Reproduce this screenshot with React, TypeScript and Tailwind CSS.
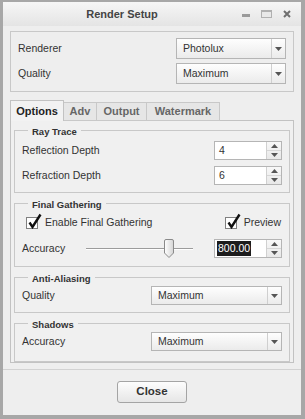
import React from "react";

function DropDown({ value, className = "" }: { value: string; className?: string }) {
  return (
    <div className={`flex border border-[#b5b5b5] bg-linear-to-b from-[#fefefe] to-[#ebebeb] ${className}`}>
      <div className="flex flex-1 items-center pl-[6px] text-[10.5px] text-[#333]">{value}</div>
      <div className="flex w-[14px] items-center justify-center border-l border-[#cfcfcf]">
        <svg width="7" height="4" viewBox="0 0 7 4">
          <path d="M0 0h7L3.5 4z" fill="#555" />
        </svg>
      </div>
    </div>
  );
}

function SpinBox({ value, selected = false }: { value: string; selected?: boolean }) {
  return (
    <div className="flex h-[19px] w-[68px] border border-[#b5b5b5] bg-white">
      <div className="flex flex-1 items-center pl-[2px] text-[10.5px] text-[#333]">
        {selected ? <span className="bg-[#1c1c1c] px-px leading-[15px] text-white">{value}</span> : <span className="pl-[2px]">{value}</span>}
      </div>
      <div className="flex w-[15px] flex-col border-l border-[#d0d0d0] bg-linear-to-b from-[#f8f8f8] to-[#e8e8e8]">
        <div className="flex flex-1 items-center justify-center border-b border-[#d6d6d6]">
          <svg width="7" height="4" viewBox="0 0 7 4">
            <path d="M0 4h7L3.5 0z" fill="#555" />
          </svg>
        </div>
        <div className="flex flex-1 items-center justify-center">
          <svg width="7" height="4" viewBox="0 0 7 4">
            <path d="M0 0h7L3.5 4z" fill="#555" />
          </svg>
        </div>
      </div>
    </div>
  );
}

function CheckBox({ label }: { label: string }) {
  return (
    <label className="flex items-center gap-[7px] text-[10.5px] text-[#333]">
      <span className="relative h-[12px] w-[12px] border border-[#808080] bg-white">
        <svg className="absolute -top-[5px] left-[1px]" width="14" height="16" viewBox="0 0 14 16">
          <path d="M1.5 9.5 L4.5 14 L12.5 1.5" fill="none" stroke="#111" strokeWidth="2.4" strokeLinejoin="miter" />
        </svg>
      </span>
      {label}
    </label>
  );
}

function Group({ title, className = "", children }: { title: string; className?: string; children: React.ReactNode }) {
  return (
    <fieldset className={`border border-[#c8c8c8] px-[7px] ${className}`}>
      <legend className="ml-[6px] h-[12px] px-[4px] text-[9.5px] leading-[16px] font-bold text-[#333]">{title}</legend>
      {children}
    </fieldset>
  );
}

export default function App() {
  return (
    <div className="h-[419px] w-[305px] border-t-[2px] border-r-[4px] border-b-[4px] border-l-[3px] border-[#a7a7a7] bg-[#eeeeee] font-['Liberation_Sans',Arial,sans-serif]">
      {/* Title bar */}
      <div className="flex h-[24px] items-center bg-linear-to-b from-[#f6f6f6] to-[#e4e4e4]">
        <div className="flex-1 text-center text-[11px] font-bold text-[#444]">Render Setup</div>
        <div className="flex w-[60px] items-center gap-[11px] pl-[1px]">
          <span className="mt-[2px] h-[3px] w-[8px] bg-[#9a9a9a]" />
          <span className="h-[8px] w-[11px] border border-[#b0b0b0] border-t-[2px] bg-[#e8e8e8]" />
          <svg width="8" height="8" viewBox="0 0 8 8">
            <path d="M1 1L7 7M7 1L1 7" stroke="#6f6f6f" strokeWidth="2" />
          </svg>
        </div>
      </div>

      <div className="px-[7px]">
        {/* Renderer / Quality */}
        <div className="mt-[5px] flex flex-col gap-[4px] border border-[#c8c8c8] pt-[6px] pr-[7px] pb-[7px] pl-[7px] text-[10.5px] text-[#333]">
          <div className="flex items-center justify-between">
            <span>Renderer</span>
            <DropDown value="Photolux" className="h-[21px] w-[110px]" />
          </div>
          <div className="flex items-center justify-between">
            <span>Quality</span>
            <DropDown value="Maximum" className="h-[21px] w-[110px]" />
          </div>
        </div>

        {/* Tabs */}
        <div className="mt-[8px] flex h-[21px] items-end">
          <div className="flex h-[21px] w-[54px] items-center justify-center border border-b-0 border-[#c2c2c2] bg-[#f2f2f2] text-[11px] font-bold text-[#222]">
            Options
          </div>
          <div className="flex h-[19px] w-[33px] items-center justify-center border-t border-r border-b border-[#c8c8c8] bg-[#e6e6e6] text-[11px] font-bold text-[#666]">
            Adv
          </div>
          <div className="flex h-[19px] w-[50px] items-center justify-center border-t border-r border-b border-[#c8c8c8] bg-[#e6e6e6] text-[11px] font-bold text-[#666]">
            Output
          </div>
          <div className="flex h-[19px] w-[73px] items-center justify-center border-t border-r border-b border-[#c8c8c8] bg-[#e6e6e6] text-[11px] font-bold text-[#666]">
            Watermark
          </div>
          <div className="flex-1 border-b border-[#c2c2c2]" />
        </div>

        {/* Tab panel */}
        <div className="h-[242px] border border-t-0 border-[#c2c2c2] bg-[#f0f0f0] px-[3px] pt-[3px] text-[10.5px] text-[#333]">
          <Group title="Ray Trace" className="pt-[5px] pb-[7px]">
            <div className="flex flex-col gap-[6px]">
              <div className="flex items-center justify-between">
                <span>Reflection Depth</span>
                <SpinBox value="4" />
              </div>
              <div className="flex items-center justify-between">
                <span>Refraction Depth</span>
                <SpinBox value="6" />
              </div>
            </div>
          </Group>

          <Group title="Final Gathering" className="mt-[4px] pt-[6px] pb-[8px]">
            <div className="flex h-[16px] items-center justify-between pl-[4px] pr-[1px]">
              <CheckBox label="Enable Final Gathering" />
              <CheckBox label="Preview" />
            </div>
            <div className="mt-[8px] flex items-center">
              <span className="w-[64px]">Accuracy</span>
              <div className="relative flex h-[19px] w-[107px] items-center">
                <div className="h-[2px] w-full border-t border-[#9c9c9c] bg-white" />
                <svg className="absolute top-0 left-[78px]" width="10" height="19" viewBox="0 0 10 19">
                  <defs>
                    <linearGradient id="thumb" x1="0" y1="0" x2="1" y2="0">
                      <stop offset="0" stopColor="#ffffff" />
                      <stop offset="1" stopColor="#d4d4d4" />
                    </linearGradient>
                  </defs>
                  <path d="M2 0.5h6a1.5 1.5 0 0 1 1.5 1.5v12l-4.5 4.5l-4.5-4.5v-12a1.5 1.5 0 0 1 1.5-1.5z" fill="url(#thumb)" stroke="#8a8a8a" />
                </svg>
              </div>
              <div className="flex-1" />
              <SpinBox value="800.00" selected />
            </div>
          </Group>

          <Group title="Anti-Aliasing" className="mt-[4px] pt-[3px] pb-[7px]">
            <div className="flex items-center justify-between">
              <span>Quality</span>
              <DropDown value="Maximum" className="h-[19px] w-[131px]" />
            </div>
          </Group>

          <Group title="Shadows" className="mt-[4px] pt-[3px] pb-[10px]">
            <div className="flex items-center justify-between">
              <span>Accuracy</span>
              <DropDown value="Maximum" className="h-[19px] w-[131px]" />
            </div>
          </Group>
        </div>
      </div>

      {/* Footer */}
      <div className="mt-[6px] flex justify-center border-t border-[#d2d2d2] pt-[11px]">
        <button
          type="button"
          className="h-[22px] w-[70px] rounded-[3px] border border-[#a4a4a4] bg-linear-to-b from-[#fdfdfd] to-[#e6e6e6] text-[11.5px] font-bold text-[#333]"
        >
          Close
        </button>
      </div>
    </div>
  );
}
